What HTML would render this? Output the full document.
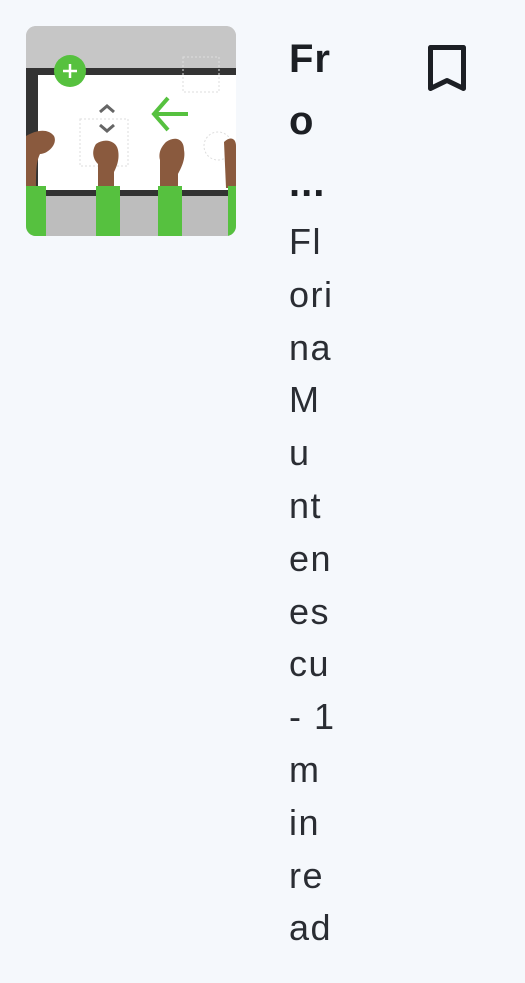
<!DOCTYPE html>
<html><head><meta charset="utf-8"><style>
html,body{margin:0;padding:0;background:#f5f8fc;width:525px;height:983px;overflow:hidden;font-family:"Liberation Sans",sans-serif;}
.thumb{position:absolute;left:26px;top:26px;width:210px;height:210px;border-radius:10px;overflow:hidden;background:#c6c6c6;}
.t{position:absolute;left:289px;top:28px;font-size:40px;line-height:62px;color:#1c1f24;font-weight:bold;letter-spacing:1px;}
.s{position:absolute;left:289px;top:216px;font-size:36px;line-height:52.8px;color:#2a2d33;letter-spacing:1.5px;}
</style></head><body>
<div class="thumb">
<svg width="210" height="210" viewBox="0 0 210 210">
<rect x="0" y="0" width="210" height="210" fill="#c6c6c6"/>
<rect x="0" y="42" width="210" height="128" fill="#333"/>
<rect x="12" y="49" width="198" height="115" fill="#fff"/>
<rect x="0" y="170" width="210" height="40" fill="#bdbdbd"/>
<rect x="157" y="31" width="36" height="35" fill="none" stroke="#ddd" stroke-dasharray="2 2"/>
<rect x="54" y="93" width="48" height="47" fill="none" stroke="#ddd" stroke-dasharray="2 2"/>
<circle cx="192" cy="120" r="14" fill="none" stroke="#ddd" stroke-dasharray="2 2"/>
<circle cx="44" cy="45" r="16" fill="#56c13f"/>
<path d="M44 38v14M37 45h14" stroke="#fff" stroke-width="2.5"/>
<path d="M74 86l7-6 7 6M74 99l7 6 7-6" fill="none" stroke="#666" stroke-width="3"/>
<path d="M142 72l-14 16 14 16M128 88h34" fill="none" stroke="#56c13f" stroke-width="4"/>
<path d="M0 110c10-6 22-8 28 0 4 8-6 18-14 18-4 8-4 18-4 34H0z" fill="#8a5a3e"/>
<path d="M70 118c8-6 20-4 22 6 2 10-2 18-4 22v16H72v-24c-6-6-6-14-2-20z" fill="#8a5a3e"/>
<path d="M140 116c8-6 18-4 18 8 2 10-4 20-6 24v14h-18v-28c-2-8 2-14 6-18z" fill="#8a5a3e"/>
<path d="M198 116c6-6 12-4 12 4v42h-10z" fill="#8a5a3e"/>
<rect x="0" y="160" width="20" height="50" fill="#56c13f"/>
<rect x="70" y="160" width="24" height="50" fill="#56c13f"/>
<rect x="132" y="160" width="24" height="50" fill="#56c13f"/>
<rect x="202" y="160" width="8" height="50" fill="#56c13f"/>
</svg>
</div>
<div class="t">Fr<br>o<br>...</div>
<div class="s">Fl<br>ori<br>na<br>M<br>u<br>nt<br>en<br>es<br>cu<br>- 1<br>m<br>in<br>re<br>ad</div>
<svg style="position:absolute;left:426px;top:43px" width="42" height="50" viewBox="0 0 42 50">
<path d="M4.5 4.5h33v41l-16.5-8-16.5 8z" fill="none" stroke="#1c1f24" stroke-width="5" stroke-linejoin="round"/>
</svg>
</body></html>
